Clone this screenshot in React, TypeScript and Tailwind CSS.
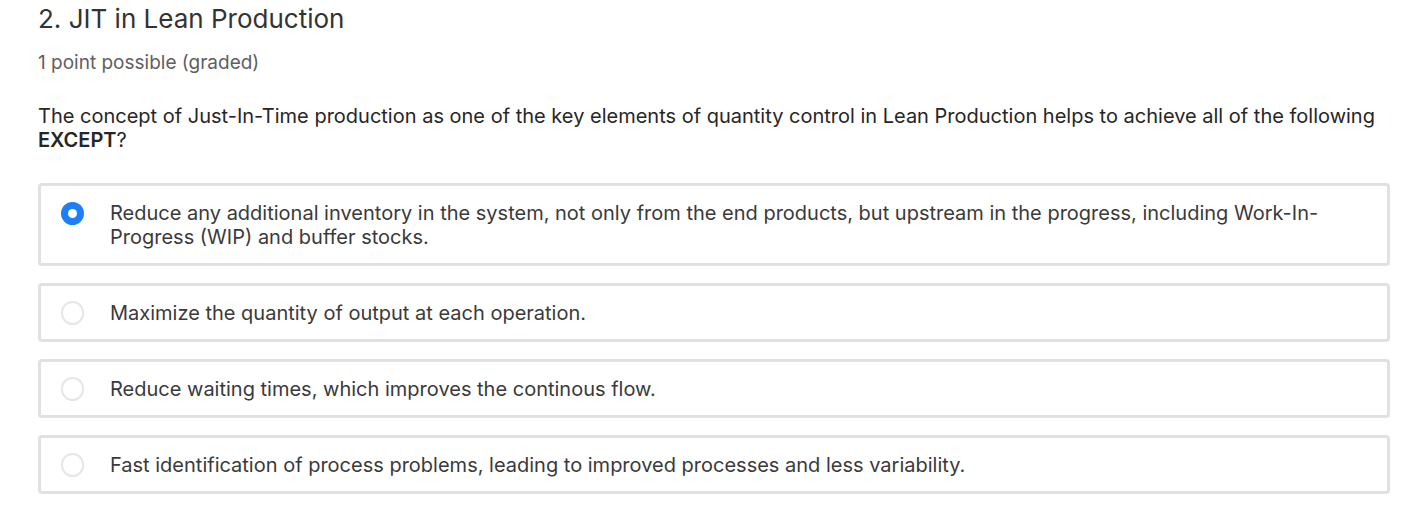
import React from "react";

const options = [
  "Reduce any additional inventory in the system, not only from the end products, but upstream in the progress, including Work-In-Progress (WIP) and buffer stocks.",
  "Maximize the quantity of output at each operation.",
  "Reduce waiting times, which improves the continous flow.",
  "Fast identification of process problems, leading to improved processes and less variability.",
];

export default function App() {
  return (
    <div className="bg-white w-[1420px] h-[512px] overflow-hidden text-[#313131]" style={{ fontFamily: "Inter, 'Noto Sans', sans-serif" }}>
      <div className="pl-[38px] pr-[30px]">
        <h2 className="text-[26px] leading-[32px] pt-[3px] text-[#333]">2. JIT in Lean Production</h2>
        <div className="mt-[16px] text-[19px] leading-[24px] text-[#5f5f5f]">1 point possible (graded)</div>
        <p className="mt-[29px] text-[20px] leading-[24px] text-[#262626]">
          The concept of Just-In-Time production as one of the key elements of quantity control in Lean Production helps to achieve all of the following <b className="font-semibold">EXCEPT</b>?
        </p>
        <div className="mt-[31px] flex flex-col gap-[17px] w-[1352px]">
          {options.map((t, i) => (
            <label key={i} className="flex items-start border-[3px] border-[#e1e1e1] rounded-[4px] pl-[20px] pr-[20px] pt-[15px] pb-[14px]">
              <span className="shrink-0 w-[23px] h-[24px] mr-[26px] flex items-center justify-center">
                {i === 0 ? (
                  <span className="w-[23px] h-[23px] rounded-full bg-[#1d7ff5] flex items-center justify-center">
                    <span className="w-[9px] h-[9px] rounded-full bg-white" />
                  </span>
                ) : (
                  <span className="w-[24px] h-[24px] rounded-full border-2 border-[#e6e6e6]" />
                )}
              </span>
              <span className="text-[20px] leading-[24px] text-[#3a3a3a]">{t}</span>
            </label>
          ))}
        </div>
      </div>
    </div>
  );
}
